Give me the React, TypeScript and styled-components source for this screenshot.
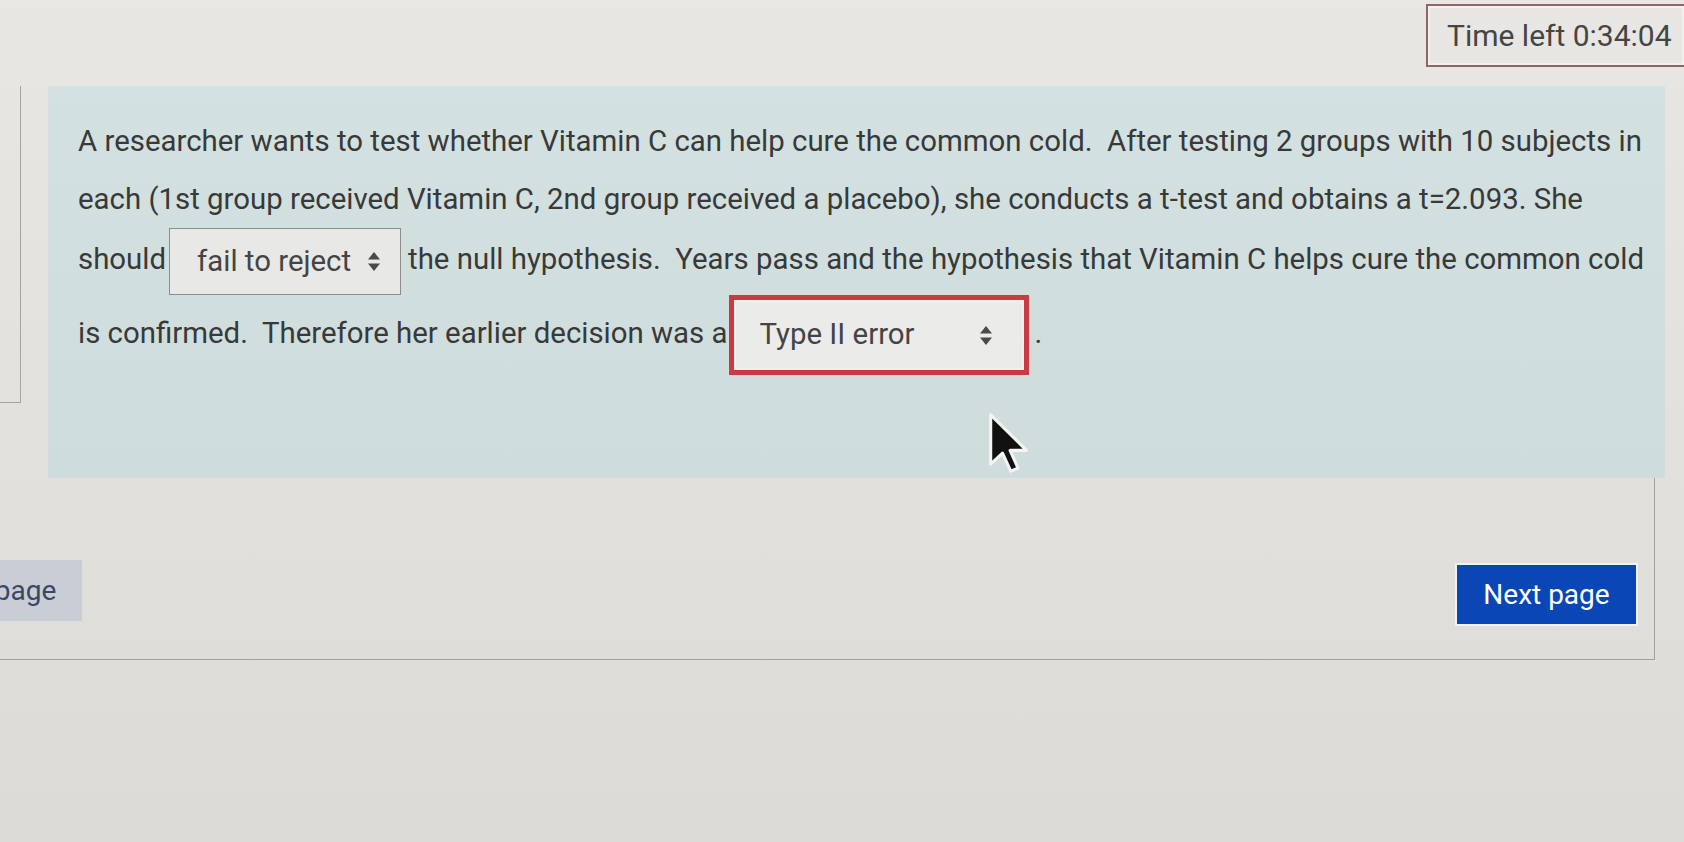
import React from "react";
import styled, { createGlobalStyle } from "styled-components";

const Global = createGlobalStyle`
  html, body { margin: 0; padding: 0; background: #e2e1de; }
  body { font-family: Roboto, "Liberation Sans", Arial, sans-serif; }
`;

const Page = styled.div`
  position: relative;
  width: 1684px;
  height: 842px;
  overflow: hidden;
  background: linear-gradient(180deg, #e8e7e4 0%, #e2e1de 50%, #dcdbd7 100%);
`;

const TopBar = styled.header`
  height: 86px;
  box-sizing: border-box;
  padding-top: 4px;
  display: flex;
  justify-content: flex-end;
  align-items: flex-start;
`;

const Timer = styled.div`
  width: 258px;
  height: 63px;
  box-sizing: border-box;
  border: 2px solid #8e6663;
  border-right: none;
  box-shadow: inset 0 0 0 2px #f2f0ed;
  display: flex;
  align-items: center;
  padding-left: 19px;
  font-size: 30px;
  color: #454545;
  white-space: nowrap;
`;

const Content = styled.main`
  display: flex;
  align-items: flex-start;
`;

const InfoEdge = styled.div`
  flex: none;
  width: 21px;
  height: 317px;
  box-sizing: border-box;
  border-right: 1px solid #a4a4a2;
  border-bottom: 1px solid #a4a4a2;
`;

const Formulation = styled.section`
  flex: none;
  margin-left: 27px;
  width: 1617px;
  height: 392px;
  box-sizing: border-box;
  padding: 26px 0 0 30px;
  background: linear-gradient(180deg, #d4e1e1 0%, #cfdcdc 100%);
  font-size: 29.4px;
  line-height: 58px;
  color: #383939;
  white-space: pre;
`;

const SelectBox = styled.span<{ $w: number; $h: number; $pl: number; $pr: number }>`
  display: inline-flex;
  align-items: center;
  justify-content: space-between;
  vertical-align: middle;
  box-sizing: border-box;
  width: ${(p) => p.$w}px;
  height: ${(p) => p.$h}px;
  padding: 0 ${(p) => p.$pr}px 0 ${(p) => p.$pl}px;
  background: #e8e8e6;
  color: #444444;
  line-height: 1;
`;

const PlainSelect = styled(SelectBox)`
  border: 1px solid #8d8d8b;
  margin: 0 7px 0 3px;
`;

const ErrorFrame = styled.span`
  display: inline-flex;
  vertical-align: middle;
  box-sizing: border-box;
  border: 5px solid #c93a42;
  box-shadow: inset 0 0 0 2px #f4eeee;
  margin: 0 6px 0 1px;
  line-height: 1;
`;

const ErrorSelect = styled(SelectBox)`
  background: #ebebe9;
  margin: 2px;
`;

const NavArea = styled.nav`
  width: 1655px;
  height: 182px;
  box-sizing: border-box;
  border-right: 1px solid #a2a19f;
  border-bottom: 1px solid #a2a19f;
  padding: 82px 18px 0 0;
  display: flex;
  justify-content: space-between;
  align-items: flex-start;
  overflow: hidden;
`;

const PrevButton = styled.button`
  margin-left: -146px;
  height: 61px;
  padding: 0 26px;
  border: none;
  background: #c9cdd5;
  color: #3b4767;
  font-family: inherit;
  font-size: 28px;
  white-space: nowrap;
`;

const NextButton = styled.button`
  width: 179px;
  height: 59px;
  margin-top: 5px;
  border: none;
  background: #0b46b6;
  box-shadow: 0 0 0 2px #f2f2f2;
  color: #ffffff;
  font-family: inherit;
  font-size: 28px;
  white-space: nowrap;
`;

const Cursor = styled.svg`
  position: absolute;
  left: 986px;
  top: 412px;
`;

const UpDown = () => (
  <svg width="14" height="21" viewBox="0 0 14 21">
    <path d="M7 1 L13 8.5 L1 8.5 Z" fill="#4a4a4a" />
    <path d="M7 20 L13 12.5 L1 12.5 Z" fill="#4a4a4a" />
  </svg>
);

export default function App() {
  return (
    <Page>
      <Global />
      <TopBar>
        <Timer>Time left 0:34:04</Timer>
      </TopBar>
      <Content>
        <InfoEdge />
        <Formulation>
          {"A researcher wants to test whether Vitamin C can help cure the common cold.  After testing 2 groups with 10 subjects in"}
          <br />
          {"each (1st group received Vitamin C, 2nd group received a placebo), she conducts a t-test and obtains a t=2.093. She"}
          <br />
          {"should"}
          <PlainSelect $w={232} $h={67} $pl={27} $pr={19}>
            {"fail to reject"}
            <UpDown />
          </PlainSelect>
          {"the null hypothesis.  Years pass and the hypothesis that Vitamin C helps cure the common cold"}
          <br />
          {"is confirmed.  Therefore her earlier decision was a"}
          <ErrorFrame>
            <ErrorSelect $w={286} $h={66} $pl={24} $pr={29}>
              {"Type II error"}
              <UpDown />
            </ErrorSelect>
          </ErrorFrame>
          {"."}
        </Formulation>
      </Content>
      <NavArea>
        <PrevButton>Previous page</PrevButton>
        <NextButton>Next page</NextButton>
      </NavArea>
      <Cursor width="46" height="62" viewBox="0 0 16 22">
        <path
          d="M1.5 1 L1.5 18.5 L5.7 14.6 L8.6 21 L11.2 19.9 L8.4 13.6 L14.2 13.6 Z"
          fill="#111111"
          stroke="#f4f4f4"
          strokeWidth="1.1"
          strokeLinejoin="round"
        />
      </Cursor>
    </Page>
  );
}
